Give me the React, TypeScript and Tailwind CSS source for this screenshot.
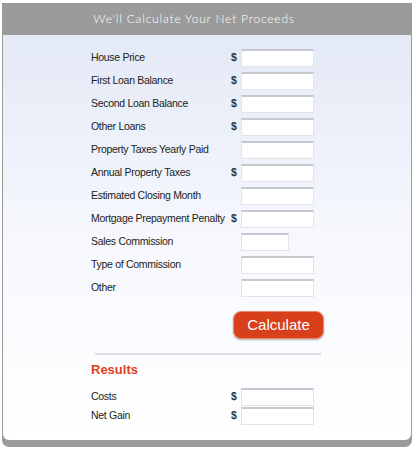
import React from "react";

const rows = [
  { label: "House Price", dollar: true },
  { label: "First Loan Balance", dollar: true },
  { label: "Second Loan Balance", dollar: true },
  { label: "Other Loans", dollar: true },
  { label: "Property Taxes Yearly Paid", dollar: false },
  { label: "Annual Property Taxes", dollar: true },
  { label: "Estimated Closing Month", dollar: false },
  { label: "Mortgage Prepayment Penalty", dollar: true },
  { label: "Sales Commission", dollar: false, short: true },
  { label: "Type of Commission", dollar: false },
  { label: "Other", dollar: false },
];

const Field = ({ short }: { short?: boolean }) => (
  <input
    type="text"
    className={`${short ? "w-[48px]" : "w-[73px]"} h-[18px] bg-white border border-[#e2e4e8] border-t-[#c5c8ce] border-t-2 outline-none`}
  />
);

export default function App() {
  return (
    <div className="w-[420px] h-[453px] bg-white pt-[3px] pl-[2px] font-['Liberation_Sans',Arial,sans-serif]">
      <div className="w-[410px] bg-[#9b9b9b] rounded-b-[7px] px-px pb-[7px]">
        {/* cabecera */}
        <div className="h-[32px] flex items-center justify-center pr-[26px]">
          <h1 className="text-white text-[12px] tracking-[0.8px] font-light font-['Lato','Open_Sans',sans-serif]">
            We'll Calculate Your Net Proceeds
          </h1>
        </div>

        <div className="h-[405px] bg-gradient-to-b from-[#e3e9f6] via-[#f6f8fd] to-white rounded-b-[6px] pt-[14px] pl-[88px]">
          <div className="flex flex-col gap-[5px]">
            {rows.map((r) => (
              <div key={r.label} className="flex items-center h-[18px] text-[10.5px] tracking-[-0.3px] text-[#222] whitespace-nowrap">
                <span className="w-[140px]">{r.label}</span>
                <span className="w-[10px] font-bold text-[#333]">{r.dollar ? "$" : ""}</span>
                <Field short={r.short} />
              </div>
            ))}
          </div>

          <div className="flex justify-start pl-[142px] mt-[14px]">
            <button className="w-[91px] h-[28px] rounded-[8px] bg-[#d7401b] border border-[#f08a6e] text-white text-[15px] shadow-[0_1px_2px_rgba(0,0,0,0.3)]">
              Calculate
            </button>
          </div>

          <div className="w-[226px] h-[2px] bg-[#dcdde0] ml-[4px] mt-[14px]" />

          <h2 className="text-[#e2401c] font-bold text-[13px] mt-[7px] h-[16px] leading-[16px]">Results</h2>

          <div className="flex flex-col mt-[9px]">
            {["Costs", "Net Gain"].map((l) => (
              <div key={l} className="flex items-center h-[19px] text-[10.5px] tracking-[-0.3px] text-[#222]">
                <span className="w-[140px]">{l}</span>
                <span className="w-[10px] font-bold text-[#333]">$</span>
                <Field />
              </div>
            ))}
          </div>
        </div>
      </div>
    </div>
  );
}
